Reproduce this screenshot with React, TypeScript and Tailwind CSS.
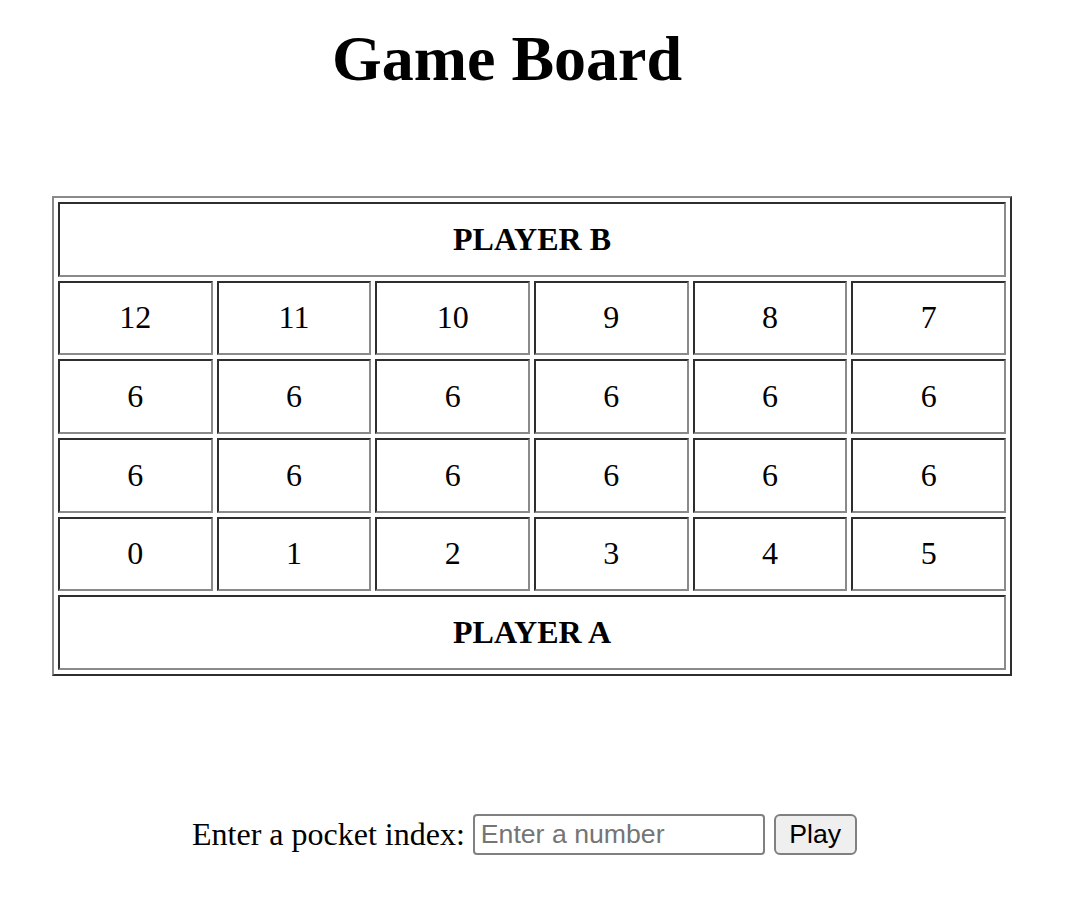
import { useState } from 'react'

// Pocket layout: top row is player B (12..7), bottom row is player A (0..5).
const TOP_INDEXES = [12, 11, 10, 9, 8, 7]
const BOTTOM_INDEXES = [0, 1, 2, 3, 4, 5]

const cellBorder =
  'border-2 border-t-[#2e2e2e] border-l-[#2e2e2e] border-b-[#8a8a8a] border-r-[#8a8a8a]'

function Cell({ children, wide = false }: { children: React.ReactNode; wide?: boolean }) {
  return (
    <div
      className={`${cellBorder} h-[74.67px] flex items-center justify-center ${
        wide ? 'col-span-6 font-bold' : ''
      }`}
    >
      {children}
    </div>
  )
}

function App(): React.JSX.Element {
  const [pockets] = useState<number[]>(() => Array(14).fill(6))
  const [value, setValue] = useState('')

  return (
    <div className="min-h-screen w-full bg-white text-black font-['Liberation_Serif',serif]">
      <div className="w-[1014px] flex justify-center pt-[23px]">
        <h1 className="text-[64px] leading-[71px] font-bold">Game Board</h1>
      </div>

      <div className="pl-[52px] mt-[102px]">
        <div className="w-[960px] border-2 border-t-[#8a8a8a] border-l-[#8a8a8a] border-b-[#2e2e2e] border-r-[#2e2e2e] p-[4px] grid grid-cols-6 gap-[4px] text-[32px] leading-[37px]">
          <Cell wide>PLAYER B</Cell>
          {TOP_INDEXES.map((i) => (
            <Cell key={`ti-${i}`}>{i}</Cell>
          ))}
          {TOP_INDEXES.map((i) => (
            <Cell key={`tp-${i}`}>{pockets[i]}</Cell>
          ))}
          {BOTTOM_INDEXES.map((i) => (
            <Cell key={`bp-${i}`}>{pockets[i]}</Cell>
          ))}
          {BOTTOM_INDEXES.map((i) => (
            <Cell key={`bi-${i}`}>{i}</Cell>
          ))}
          <Cell wide>PLAYER A</Cell>
        </div>
      </div>

      <div className="pl-[192px] mt-[138px] flex items-center h-[41px]">
        <label htmlFor="pocket" className="text-[32px] leading-[37px]">
          Enter a pocket index:
        </label>
        <input
          id="pocket"
          type="text"
          value={value}
          onChange={(e) => setValue(e.target.value)}
          placeholder="Enter a number"
          className="ml-[8px] w-[292px] h-[41px] border-2 border-[#808080] rounded-[4px] px-[6px] text-[26.67px] font-['Liberation_Sans',Arial,sans-serif] placeholder:text-[#757575] outline-none"
        />
        <button
          type="button"
          className="ml-[9px] w-[83px] h-[41px] bg-[#efefef] border-2 border-[#808080] rounded-[6px] text-[26.67px] leading-[30px] font-['Liberation_Sans',Arial,sans-serif] text-black"
        >
          Play
        </button>
      </div>
    </div>
  )
}

export default App
